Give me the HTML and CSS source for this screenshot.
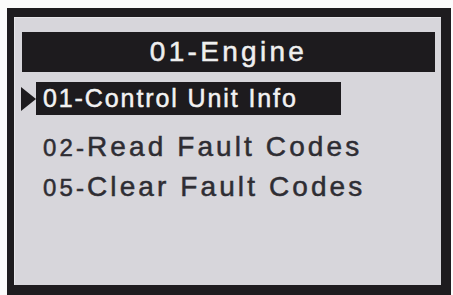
FILE: index.html
```html
<!DOCTYPE html>
<html>
<head>
<meta charset="utf-8">
<link rel="stylesheet" href="styles.css">
</head>
<body>
<div class="frame">
  <div class="screen">
    <div class="title">01-Engine</div>
    <div class="menu">
      <div class="sel-row">
        <span class="cursor"></span>
        <div class="sel">01-Control Unit Info</div>
      </div>
      <div class="item"><span class="num">02-</span>Read Fault Codes</div>
      <div class="item"><span class="num">05-</span>Clear Fault Codes</div>
    </div>
  </div>
</div>
</body>
</html>
```

FILE: styles.css
```css
html, body {
  margin: 0;
  padding: 0;
  background: #fbfbfb;
}
body {
  width: 453px;
  height: 295px;
  overflow: hidden;
  font-family: "Liberation Sans", Arial, sans-serif;
}
.frame {
  margin: 8px 0 0 7px;
  width: 444px;
  height: 287px;
  box-sizing: border-box;
  background: #1e1c1f;
  padding: 9px 10px 10px 7px;
  display: flex;
}
.screen {
  flex: 1;
  background: #d7d6db;
  border-top: 1px solid #e6e6e9;
  border-left: 1px solid #e6e6e9;
  display: flex;
  flex-direction: column;
}
.title {
  margin: 14px 6px 0 7px;
  height: 40px;
  line-height: 40px;
  background: #1d1b1e;
  color: #efefef;
  font-size: 28px;
  letter-spacing: 3.3px;
  text-align: center;
  -webkit-text-stroke: 0.5px #efefef;
}
.menu {
  display: flex;
  flex-direction: column;
}
.sel-row {
  margin: 10px 0 0 6px;
  display: flex;
  align-items: center;
}
.cursor {
  width: 0;
  height: 0;
  border-left: 15px solid #1d1b1e;
  border-top: 12.5px solid transparent;
  border-bottom: 12.5px solid transparent;
}
.sel {
  width: 298px;
  height: 33px;
  line-height: 33px;
  padding-left: 7px;
  background: #1d1b1e;
  color: #f2f2f2;
  font-size: 25px;
  letter-spacing: 1.9px;
  white-space: nowrap;
  -webkit-text-stroke: 0.5px #f2f2f2;
}
.item {
  margin-left: 28px;
  height: 40px;
  line-height: 40px;
  color: #2e2d33;
  font-size: 28px;
  letter-spacing: 3.1px;
  white-space: nowrap;
  -webkit-text-stroke: 0.5px #2e2d33;
}
.menu .item:nth-child(2) {
  margin-top: 12px;
}
.num {
  font-size: 24px;
}
```
